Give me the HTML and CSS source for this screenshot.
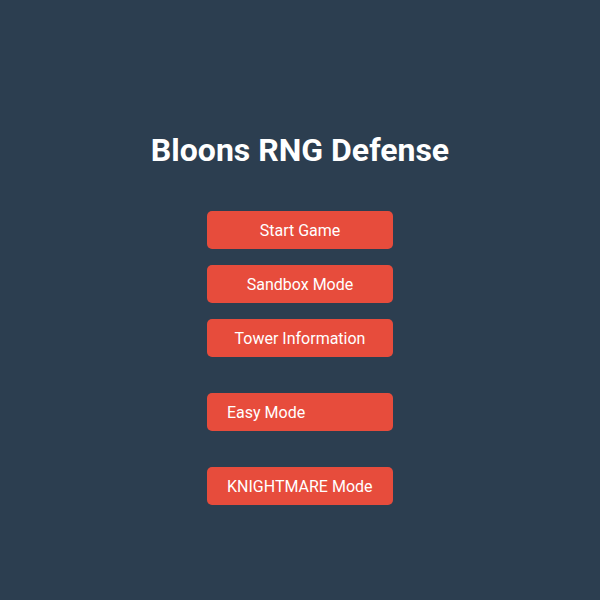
FILE: index.html
```html
<!DOCTYPE html>
<html>
<head>
<meta charset="utf-8">
<link rel="stylesheet" href="styles.css">
</head>
<body>
<main class="menu">
  <h1 class="title">Bloons RNG Defense</h1>
  <div class="group">
    <button class="btn">Start Game</button>
    <button class="btn">Sandbox Mode</button>
    <button class="btn">Tower Information</button>
  </div>
  <div class="group mode">
    <button class="btn left">Easy Mode</button>
  </div>
  <div class="group mode">
    <button class="btn left">KNIGHTMARE Mode</button>
  </div>
</main>
</body>
</html>
```
FILE: styles.css
```css
html, body {
  margin: 0;
  padding: 0;
  height: 100%;
}
body {
  background: #2c3e50;
  font-family: Roboto, "Noto Sans", sans-serif;
  color: #fff;
}
.menu {
  display: flex;
  flex-direction: column;
  align-items: center;
  padding-top: 130px;
}
.title {
  margin: 0;
  font-size: 32px;
  font-weight: 700;
  line-height: 41px;
  color: #fff;
}
.group {
  display: flex;
  flex-direction: column;
  gap: 16px;
  margin-top: 40px;
}
.group.mode {
  margin-top: 36px;
}
.btn {
  width: 186px;
  height: 38px;
  border: none;
  border-radius: 5px;
  background: #e74c3c;
  color: #fff;
  font-family: Roboto, "Noto Sans", sans-serif;
  font-size: 16px;
  padding: 0 20px;
  text-align: center;
}
.btn.left {
  text-align: left;
}
```
